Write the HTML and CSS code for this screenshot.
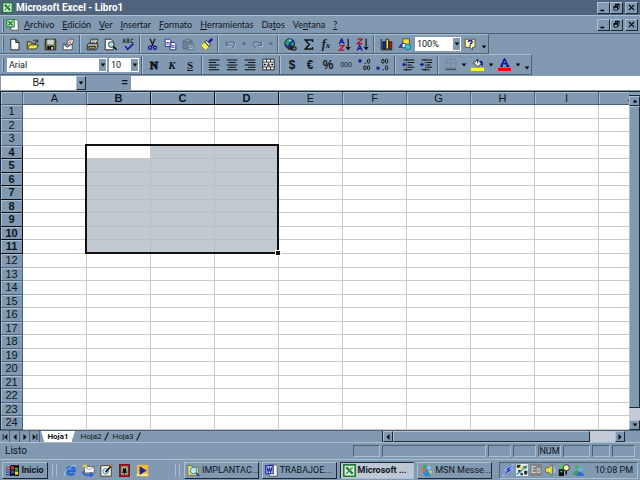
FILE: index.html
```
<!DOCTYPE html>
<html lang="es">
<head>
<meta charset="utf-8">
<title>Microsoft Excel - Libro1</title>
<link rel="stylesheet" href="styles.css">
</head>
<body>
<svg class="defs" aria-hidden="true">
  <symbol id="xl" viewBox="0 0 16 16"><path fill="#e8f4e4" stroke="#1d7a33" stroke-width="2" d="M1 1h14v14H1z"/><path fill="none" stroke="#1d7a33" stroke-width="3" d="M4 4l8 8"/><path fill="none" stroke="#3f9a50" stroke-width="2" d="M12 4l-8 8"/></symbol>
  <symbol id="min" viewBox="0 0 12 12"><path d="M2 9h5v2H2z"/></symbol>
  <symbol id="restore" viewBox="0 0 12 12"><path fill="none" stroke="#000" d="M4.500 4V2.500h5v5H8M2.500 5.500h5v4h-5z"/><path d="M4 1h6v2H4zM2 4h6v2H2z"/></symbol>
  <symbol id="close" viewBox="0 0 12 12"><path fill="none" stroke="#000" stroke-width="1.600" d="M2.500 2.500l7 7M9.500 2.500l-7 7"/></symbol>
  <symbol id="down" viewBox="0 0 8 8"><path d="M1 2h6L4 6z"/></symbol>
  <symbol id="up" viewBox="0 0 8 8"><path d="M1 6h6L4 2z"/></symbol>
  <symbol id="left" viewBox="0 0 8 8"><path d="M6 0v8L2 4z"/></symbol>
  <symbol id="right" viewBox="0 0 8 8"><path d="M2 0v8l4-4z"/></symbol>
  <symbol id="first" viewBox="0 0 8 8"><path d="M7 0v8L3 4zM1 0h1v8H1z"/></symbol>
  <symbol id="last" viewBox="0 0 8 8"><path d="M1 0v8l4-4zM6 0h1v8H6z"/></symbol>
</svg>

<header class="titlebar">
  <svg class="ic-s"><use href="#xl"/></svg>
  <h1>Microsoft Excel - Libro1</h1>
  <div class="winbtns">
    <button type="button" aria-label="Minimizar"><svg><use href="#min"/></svg></button>
    <button type="button" aria-label="Restaurar"><svg><use href="#restore"/></svg></button>
    <button type="button" class="x" aria-label="Cerrar"><svg><use href="#close"/></svg></button>
  </div>
</header>

<nav class="menubar">
  <span class="grip"></span>
  <svg class="ic" viewBox="0 0 16 16"><path fill="#fff" stroke="#444" d="M6 2h7l2 2v11H6z"/><path fill="#e8f4e4" stroke="#1d8a33" stroke-width="1.500" d="M1 2h9v9H1z"/><path fill="none" stroke="#1d8a33" stroke-width="2" d="M3 4l5 5M8 4L3 9"/></svg>
  <div class="menus">
    <a href="#"><u>A</u>rchivo</a><a href="#"><u>E</u>dición</a><a href="#"><u>V</u>er</a><a href="#"><u>I</u>nsertar</a><a href="#"><u>F</u>ormato</a><a href="#"><u>H</u>erramientas</a><a href="#">Da<u>t</u>os</a><a href="#">Ve<u>n</u>tana</a><a href="#"><u>?</u></a>
  </div>
  <div class="winbtns">
    <button type="button" aria-label="Minimizar libro"><svg><use href="#min"/></svg></button>
    <button type="button" aria-label="Restaurar libro"><svg><use href="#restore"/></svg></button>
    <button type="button" class="x" aria-label="Cerrar libro"><svg><use href="#close"/></svg></button>
  </div>
</nav>

<div class="toolbar" role="toolbar" aria-label="Estándar">
  <span class="grip"></span>
  <button type="button" aria-label="Nuevo"><svg viewBox="0 0 16 16"><path fill="#fff" stroke="#111" d="M3.500 1.500h6l4 4v9h-10zM9.500 1.500v4h4"/></svg></button>
  <button type="button" aria-label="Abrir"><svg viewBox="0 0 16 16"><path fill="#c9c04a" stroke="#222" d="M1.500 13.500v-9h4l1 2h5v2"/><path fill="#f2ea4c" stroke="#222" d="M1.500 13.500l3-5h11l-3 5z"/><path fill="none" stroke="#111" d="M9 3.500c2-2 4-1 5 1M14.500 2v3h-3"/></svg></button>
  <button type="button" aria-label="Guardar"><svg viewBox="0 0 16 16"><path fill="#77773a" stroke="#111" d="M1.500 1.500h13v13h-13z"/><path fill="#cfd3d6" d="M4 2h8v6H4z"/><path fill="#111" d="M4 10h8v4H4z"/><path fill="#ddd" d="M9 11h2v3H9z"/></svg></button>
  <button type="button" aria-label="Correo"><svg viewBox="0 0 16 16"><path fill="#fff" stroke="#444" d="M5.500 7.500l3-6h6l-2 7M1.500 7.500h11v7h-11zM1.500 7.500l5 4 6-4"/><path fill="none" stroke="#c44" d="M9 3.500h3M8 5.500h3"/></svg></button>
  <span class="sep"></span>
  <button type="button" aria-label="Imprimir"><svg viewBox="0 0 16 16"><path fill="#fff" stroke="#111" d="M4.500 7.500l2-6h8l-2 6z"/><path fill="#a7a7a0" stroke="#111" d="M1.500 8.500l2-2h11v5l-2 3h-11z"/><path fill="#e6e24c" stroke="#111" d="M3.500 10.500h8v2h-8z"/><path stroke="#555" d="M7 3.500h5M6 5.500h5"/></svg></button>
  <button type="button" aria-label="Vista preliminar"><svg viewBox="0 0 16 16"><path fill="#fff" stroke="#111" d="M1.500 1.500h7l3 3v10h-10z"/><circle cx="9" cy="8" r="3.500" fill="#a9e3e6" stroke="#111"/><path stroke="#111" stroke-width="2" d="M11.500 10.500l4 4"/></svg></button>
  <button type="button" aria-label="Ortografía"><svg viewBox="0 0 16 16"><path fill="none" stroke="#222" d="M1 6l1.500-5L4 6M1.500 4.500h2M6 1v4.500h2.500V3.500H6.500M8 3.500V1H6M14 1.500h-3v4h3"/><path fill="none" stroke="#1717b0" stroke-width="2" d="M4 10l3 4 7-7"/></svg></button>
  <span class="sep"></span>
  <button type="button" aria-label="Cortar"><svg viewBox="0 0 16 16"><path fill="none" stroke="#111" stroke-width="1.500" d="M5 1l4 9M11 1l-4 9"/><g fill="none" stroke="#14149c" stroke-width="1.500"><circle cx="5" cy="12" r="2"/><circle cx="11" cy="12" r="2"/></g></svg></button>
  <button type="button" aria-label="Copiar"><svg viewBox="0 0 16 16"><path fill="#fff" stroke="#14149c" d="M1.500 1.500h5l2 2v7h-7zM7.500 5.500h5l2 2v7h-7z"/><path stroke="#14149c" d="M3 5.500h3M3 7.500h3M9 9.500h4M9 11.500h4"/></svg></button>
  <button type="button" aria-label="Pegar"><svg viewBox="0 0 16 16"><path fill="#6d8298" stroke="#52667c" d="M1.500 3.500h11v10h-11z"/><path fill="#8fa5ba" stroke="#52667c" d="M4.500 1.500h5v3h-5z"/><path fill="#a9bccd" stroke="#52667c" d="M7.500 7.500h7v7h-7zM9 9.500h4M9 11.500h4"/></svg></button>
  <button type="button" aria-label="Copiar formato"><svg viewBox="0 0 16 16"><path stroke="#14149c" stroke-width="3" d="M15 1l-4 4"/><path fill="#ddd" stroke="#222" d="M8 3l5 5-2 2-5-5z"/><path fill="#f6ee45" stroke="#776" d="M5 5l6 6-4 4.500-6-6z"/></svg></button>
  <span class="sep"></span>
  <button type="button" aria-label="Deshacer"><svg viewBox="0 0 16 16"><g fill="none" stroke="#b4c5d4" transform="translate(1 1)"><path stroke-width="1.500" d="M3 4v5h5M3 9c3-6 10-5 10-1 0 2-1 3-3 4"/></g><path fill="none" stroke="#586f88" stroke-width="1.500" d="M3 4v5h5M3 9c3-6 10-5 10-1 0 2-1 3-3 4"/></svg></button>
  <button type="button" class="drop dim" aria-label="Lista deshacer"><svg><use href="#down"/></svg></button>
  <button type="button" aria-label="Rehacer"><svg viewBox="0 0 16 16"><path fill="none" stroke="#b4c5d4" stroke-width="1.500" d="M14 5v5H9M14 10C11 4 4 5 4 9c0 2 1 3 3 4"/><path fill="none" stroke="#586f88" stroke-width="1.500" d="M13 4v5H8M13 9C10 3 3 4 3 8c0 2 1 3 3 4"/></svg></button>
  <button type="button" class="drop dim" aria-label="Lista rehacer"><svg><use href="#down"/></svg></button>
  <span class="sep"></span>
  <button type="button" aria-label="Hipervínculo"><svg viewBox="0 0 16 16"><circle cx="7" cy="7" r="6" fill="#1a36b8" stroke="#123"/><path fill="#2fa84a" d="M3 3l4-2 2 3-3 2-1 4-3-3zM9 6l3-1v4l-3 1z"/><path fill="#9cd7ea" d="M6 2h3v2H6z"/><g fill="none" stroke="#222" stroke-width="1.500"><ellipse cx="8" cy="12" rx="3" ry="2"/><ellipse cx="12" cy="13" rx="3" ry="2"/></g></svg></button>
  <button type="button" aria-label="Autosuma"><svg viewBox="0 0 16 16"><path fill="none" stroke="#111" stroke-width="1.800" d="M13 5V2.500H4L9 8l-5 5.500h9V11"/></svg></button>
  <button type="button" class="fx" aria-label="Pegar función"><i>f<small>x</small></i></button>
  <button type="button" aria-label="Orden ascendente"><svg viewBox="0 0 16 16"><path fill="none" stroke="#14149c" stroke-width="1.500" d="M1.500 7.500L4.500 1l3 6.500M2.500 5h4"/><path fill="none" stroke="#b01020" stroke-width="1.500" d="M1.500 9.500h6l-6 5.500h6"/><path stroke="#111" stroke-width="1.500" d="M12.500 1v12"/><path d="M9.500 11h6l-3 4z"/></svg></button>
  <button type="button" aria-label="Orden descendente"><svg viewBox="0 0 16 16"><path fill="none" stroke="#b01020" stroke-width="1.500" d="M1.500 1.500h6l-6 5.500h6"/><path fill="none" stroke="#14149c" stroke-width="1.500" d="M1.500 15.500l3-6.500 3 6.500M2.500 13h4"/><path stroke="#111" stroke-width="1.500" d="M12.500 1v12"/><path d="M9.500 11h6l-3 4z"/></svg></button>
  <span class="sep"></span>
  <button type="button" aria-label="Asistente para gráficos"><svg viewBox="0 0 16 16"><path fill="none" stroke="#111" d="M1.500 1v13.500H15"/><path fill="#1a28c8" stroke="#111" d="M3.500 4.500h3v9h-3z"/><path fill="#f5ea3a" stroke="#111" d="M7.500 1.500h3v12h-3z"/><path fill="#d01818" stroke="#111" d="M11.500 4.500h3v9h-3z"/></svg></button>
  <button type="button" aria-label="Dibujo"><svg viewBox="0 0 16 16"><path fill="#f0e23c" stroke="#443" d="M6 1h8v7H6z"/><path fill="#1d35b4" d="M0 12L6 5l3 7z"/><path fill="#fff" stroke="#333" d="M5 7h5v5H5z"/><circle cx="12" cy="11" r="3.500" fill="#35c8d8" stroke="#167"/></svg></button>
  <span class="combo zoom"><input type="text" value="100%" aria-label="Zoom"><button type="button" aria-label="Lista zoom"><svg><use href="#down"/></svg></button></span>
  <button type="button" aria-label="Ayuda"><svg viewBox="0 0 16 16"><path fill="#fff7a0" stroke="#444" d="M1.500 1.500h12v10h-3v3l-3-3h-6z"/><path fill="none" stroke="#14149c" stroke-width="1.800" d="M5.500 5c0-2.500 4.500-2.500 4.500 0 0 1.500-2.300 1.500-2.300 3M7.700 9v1.500"/></svg></button>
  <button type="button" class="drop low" aria-label="Más botones"><svg><use href="#down"/></svg></button>
</div>

<div class="toolbar fmt" role="toolbar" aria-label="Formato">
  <span class="grip"></span>
  <span class="combo font"><input type="text" value="Arial" aria-label="Fuente"><button type="button" aria-label="Lista fuentes"><svg><use href="#down"/></svg></button></span>
  <span class="combo size"><input type="text" value="10" aria-label="Tamaño"><button type="button" aria-label="Lista tamaños"><svg><use href="#down"/></svg></button></span>
  <span class="sep"></span>
  <button type="button" class="glyph heavy">N</button>
  <button type="button" class="glyph"><i>K</i></button>
  <button type="button" class="glyph"><u>S</u></button>
  <span class="sep"></span>
  <button type="button" aria-label="Izquierda"><svg viewBox="0 0 16 16"><path stroke="#111" stroke-width="1.300" d="M1 2.500h13M1 5.500h9M1 8.500h13M1 11.500h9M1 14.500h13"/></svg></button>
  <button type="button" aria-label="Centrar"><svg viewBox="0 0 16 16"><path stroke="#111" stroke-width="1.300" d="M1 2.500h13M3 5.500h9M1 8.500h13M3 11.500h9M1 14.500h13"/></svg></button>
  <button type="button" aria-label="Derecha"><svg viewBox="0 0 16 16"><path stroke="#111" stroke-width="1.300" d="M1 2.500h13M5 5.500h9M1 8.500h13M5 11.500h9M1 14.500h13"/></svg></button>
  <button type="button" aria-label="Combinar y centrar"><svg viewBox="0 0 16 16"><path fill="#fff" stroke="#111" d="M1 1.500h14v13H1zM1 5h14M1 11h14M5.500 1.500V5M10.500 1.500V5M5.500 11v3.500M10.500 11v3.500"/><path d="M2 8l2-2v4zM14 8l-2-2v4z"/><path fill="none" stroke="#111" d="M6.500 10.500L8 6l1.500 4.500M7 9h2M4 8h1.500M10.500 8H12"/></svg></button>
  <span class="sep"></span>
  <button type="button" class="glyph cur">$</button>
  <button type="button" class="glyph cur">€</button>
  <button type="button" class="glyph cur">%</button>
  <button type="button" class="glyph tiny">000</button>
  <button type="button" aria-label="Aumentar decimales"><svg viewBox="0 0 16 16"><path stroke="#14149c" stroke-width="1.500" d="M0 3.500h5M2.500 1v5"/><g fill="none" stroke="#111" stroke-width="1.200"><ellipse cx="13" cy="4" rx="1.500" ry="2.500"/><ellipse cx="8.500" cy="12" rx="1.500" ry="2.500"/><ellipse cx="13" cy="12" rx="1.500" ry="2.500"/></g><path d="M8 6h2v1H8z"/></svg></button>
  <button type="button" aria-label="Disminuir decimales"><svg viewBox="0 0 16 16"><path stroke="#14149c" stroke-width="1.500" d="M0 12.500h5M2.500 10v5"/><g fill="none" stroke="#111" stroke-width="1.200"><ellipse cx="8.500" cy="4" rx="1.500" ry="2.500"/><ellipse cx="13" cy="4" rx="1.500" ry="2.500"/><ellipse cx="13" cy="12" rx="1.500" ry="2.500"/></g><path d="M8 14h2v1H8z"/></svg></button>
  <span class="sep wide"></span>
  <button type="button" aria-label="Disminuir sangría"><svg viewBox="0 0 16 16"><path stroke="#111" stroke-width="1.300" d="M2 2.500h13M7 5.500h8M7 8.500h5M7 11.500h8M2 14.500h10"/><path stroke="#111" stroke-dasharray="1 1" d="M5.500 1v15"/><path fill="#14149c" d="M0 8l3-3v2h2v2H3v2z"/></svg></button>
  <button type="button" aria-label="Aumentar sangría"><svg viewBox="0 0 16 16"><path stroke="#111" stroke-width="1.300" d="M2 2.500h13M8 5.500h7M8 8.500h5M8 11.500h7M2 14.500h10"/><path stroke="#111" stroke-dasharray="1 1" d="M6.500 1v15"/><path fill="#14149c" d="M5 8L2 5v2H0v2h2v2z"/></svg></button>
  <span class="sep"></span>
  <button type="button" aria-label="Bordes"><svg viewBox="0 0 16 16"><path fill="none" stroke="#64788e" stroke-dasharray="1 1" d="M2.500 1.500h12v10h-12zM8.500 1v10M2 6.500h12"/><path fill="#4a5260" d="M2 13h13v2H2z"/></svg></button>
  <button type="button" class="drop" aria-label="Lista bordes"><svg><use href="#down"/></svg></button>
  <button type="button" aria-label="Color de relleno"><svg viewBox="0 0 16 16"><path fill="#ddd" stroke="#222" d="M3 6l5-4 5 5-5 4z"/><path fill="none" stroke="#222" d="M8 6V1"/><path fill="#14149c" d="M11 3c4 0 4 4 3 8l-2-4z"/><path fill="#ff0" d="M0 12h16v4H0z"/></svg></button>
  <button type="button" class="drop" aria-label="Lista relleno"><svg><use href="#down"/></svg></button>
  <button type="button" aria-label="Color de fuente"><svg viewBox="0 0 16 16"><path fill="none" stroke="#14149c" stroke-width="2" d="M4 9.500L8 1l4 8.500M5 7h6M3 10h3M10 10h4"/><path fill="#f00" d="M0 12h16v4H0z"/></svg></button>
  <button type="button" class="drop" aria-label="Lista color"><svg><use href="#down"/></svg></button>
  <button type="button" class="drop low" aria-label="Más formato"><svg><use href="#down"/></svg></button>
</div>

<div class="formulabar">
  <input class="namebox" type="text" value="B4" aria-label="Cuadro de nombres">
  <button type="button" class="raised" aria-label="Lista nombres"><svg><use href="#down"/></svg></button>
  <label for="formula">=</label>
  <input id="formula" type="text">
</div>

<main class="sheet">
  <table id="grid"></table>
  <div class="vscroll">
    <span class="split"></span>
    <button type="button" aria-label="Subir"><svg><use href="#up"/></svg></button>
    <span class="thumb"></span><span class="track"></span>
    <button type="button" aria-label="Bajar"><svg><use href="#down"/></svg></button>
  </div>
</main>

<div class="tabs">
  <div class="tabnav">
    <button type="button" aria-label="Primera"><svg><use href="#first"/></svg></button>
    <button type="button" aria-label="Anterior"><svg><use href="#left"/></svg></button>
    <button type="button" aria-label="Siguiente"><svg><use href="#right"/></svg></button>
    <button type="button" aria-label="Última"><svg><use href="#last"/></svg></button>
  </div>
  <div class="tablist">
    <a href="#" class="on">Hoja1</a>
    <a href="#">Hoja2</a>
    <a href="#">Hoja3</a>
  </div>
  <div class="hscroll">
    <span class="split"></span>
    <button type="button" aria-label="Izquierda"><svg><use href="#left"/></svg></button>
    <span class="thumb"></span><span class="track"></span>
    <button type="button" aria-label="Derecha"><svg><use href="#right"/></svg></button>
    <span class="corner"></span>
  </div>
</div>

<div class="status">
  <span class="msg">Listo</span>
  <span class="p a"></span><span class="p b"></span><span class="p c"></span><span class="p c"></span><span class="p c">NUM</span><span class="p a"></span><span class="p d"></span><span class="p c"></span>
</div>

<footer class="taskbar">
  <button type="button" class="start raised"><svg viewBox="0 0 16 16"><path d="M5 2c3-2 7 1 11-1v13c-4 2-8-1-11 1z"/><path fill="#e03020" d="M6 3c1.500-1 3 0 4 0v4c-1 0-2.500-1-4 0z"/><path fill="#30a040" d="M11 4c1.500.500 3 .500 4 0v4c-1 .500-2.500.500-4 0z"/><path fill="#3050d0" d="M6 8c1.500-1 3 0 4 0v4c-1 0-2.500-1-4 0z"/><path fill="#f0d830" d="M11 9c1.500.500 3 .500 4 0v4c-1 .500-2.500.500-4 0z"/><path stroke="#a01818" stroke-width="1.500" stroke-dasharray="2 1" d="M0 4h5M0 7h5"/><path stroke="#1c2c90" stroke-width="1.500" stroke-dasharray="2 1" d="M0 10h5M0 13h5"/></svg>Inicio</button>
  <span class="grips"></span>
  <div class="quick">
    <button type="button" aria-label="Internet Explorer"><svg viewBox="0 0 16 16"><path fill="none" stroke="#2468d8" stroke-width="3" d="M4 8.500h9C13 2 4 2 4 8.500c0 5 6 6 8.500 3"/><path fill="none" stroke="#bfe0ff" d="M1 14C-1 10 10 0 15 2"/></svg></button>
    <button type="button" aria-label="Outlook Express"><svg viewBox="0 0 16 16"><path fill="#fff" stroke="#555" d="M3 3h12v8H3z"/><path fill="none" stroke="#777" d="M3 3l6 4 6-4"/><path fill="none" stroke="#2c62d6" stroke-width="2" d="M1 9c0 5 6 6 11 4M10 10l3 3-3 3"/><path fill="#f0c83c" d="M1 1h5v3H1z"/></svg></button>
    <button type="button" aria-label="Escritorio"><svg viewBox="0 0 16 16"><path fill="#c9ab58" stroke="#444" d="M1 2h13v13H1z"/><path fill="#f2fafa" d="M2 3h11v11H2z"/><circle cx="7" cy="9" r="3.500" fill="#cfe8ee" stroke="#3a7a8a"/><path stroke="#111" stroke-width="2" d="M7 10l8-9"/><path stroke="#e0a020" stroke-width="2" d="M13 3l2-2"/></svg></button>
    <button type="button" aria-label="Juego"><svg viewBox="0 0 16 16"><path fill="#b81818" stroke="#211" d="M2 0h12v16H2z"/><path fill="#9cc4a4" d="M4 3h8v10H4z"/><path d="M6 4l2 2 2-2v4l1 3H9l-1 2-1-2H5l1-3z"/></svg></button>
    <button type="button" aria-label="Reproductor"><svg viewBox="0 0 16 16"><path fill="#f4b820" d="M1 1h14v14H1z"/><path fill="#f8e490" d="M1 12h14v3H1z"/><path fill="#26267c" stroke="#fff" stroke-width=".500" d="M4 2l10 6-10 6z"/></svg></button>
  </div>
  <span class="grips"></span>
  <div class="tasks">
    <button type="button" class="raised"><svg viewBox="0 0 16 16"><path fill="#f3df66" stroke="#665" d="M1 2h5l1 2h7v10H1z"/><circle cx="8" cy="8" r="4" fill="#b5ecf4" stroke="#27a"/><path stroke="#124ca0" stroke-width="2" d="M11 11l4 4"/></svg><span>IMPLANTAC...</span></button>
    <button type="button" class="raised"><svg viewBox="0 0 16 16"><path fill="#fff" stroke="#444" d="M5 1h8l2 2v12H5z"/><path fill="#dde4ff" stroke="#1c2ca0" stroke-width="1.500" d="M1 2h9v10H1z"/><path fill="none" stroke="#1c2ca0" stroke-width="1.500" d="M2.500 4l1.500 6 1.500-5L7 10l1.500-6"/></svg><span>TRABAJOE...</span></button>
    <button type="button" class="raised active"><svg><use href="#xl"/></svg><span>Microsoft ...</span></button>
    <button type="button" class="raised"><svg viewBox="0 0 16 16"><path fill="#2c8ad8" d="M4 6c4-2 8 2 9 9H7c-3-2-4-5-3-9z"/><path fill="#e86a28" d="M1 4l5 2 1 5-4-2z"/><circle cx="6" cy="3" r="2.500" fill="#38b058"/><circle cx="11" cy="5" r="2.500" fill="#7cc8f0"/><path fill="#f0d040" d="M10 8l5 1-2 4z"/></svg><span>MSN Messe...</span></button>
  </div>
  <div class="tray">
    <svg viewBox="0 0 16 16"><path fill="#2038e0" stroke="#dfe8ff" stroke-width=".700" d="M16 0L3 8h4l-6 8 14-9h-5z"/></svg>
    <svg viewBox="0 0 16 16"><path fill="#e8ecec" d="M0 0h16v16H0z"/><path fill="#20262c" d="M1 1h5v4H1zM9 3h5v3H9zM3 8h4v3H3zM11 9h4v5h-4zM6 12h3v3H6z"/><path stroke="#3aa0a8" stroke-width="2" d="M1 14L15 2"/><path fill="#f0e040" d="M5 3h5v3H5z"/></svg>
    <span class="lang">Es</span>
    <svg viewBox="0 0 16 16"><path fill="#f0e23c" stroke="#554" d="M2 5h4l5-4v14l-5-4H2z"/><path fill="none" stroke="#dfe6ec" d="M13 4c2 2 2 6 0 8"/></svg>
    <svg viewBox="0 0 16 16"><path fill="#111" d="M1 7h7v9H1z"/><path fill="#3bd050" d="M2 2h5v4H2zM3 9h3v2H3z"/><circle cx="11" cy="5" r="4" fill="#fff8b0" stroke="#111"/><path fill="none" stroke="#111" stroke-width="2" d="M11 9v5"/></svg>
    <svg viewBox="0 0 16 16"><circle cx="7" cy="4" r="3" fill="#46b070"/><path fill="#3c9c60" d="M1 15c0-8 11-8 11 0z"/><circle cx="11" cy="7" r="2.500" fill="#5cb8f0"/><path fill="#2c70d0" d="M6 16c0-7 10-7 10 0z"/></svg>
    <time>10:08 PM</time>
  </div>
</footer>
<script src="grid.js"></script>
</body>
</html>
```

FILE: styles.css
```
:root {
  --face: #8199b1;
  --light: #abbfd1;
  --dark: #4c6078;
  --ink: #10151c;
}
* { box-sizing: border-box; }
body {
  margin: 0;
  height: 100vh;
  display: flex;
  flex-direction: column;
  background: var(--face);
  color: var(--ink);
  font: 9px/12px Roboto, "Liberation Sans", sans-serif;
  overflow: hidden;
}
.defs { display: none; }
svg { display: block; width: 13px; height: 13px; flex: none; }
button, input {
  font: inherit;
  color: inherit;
  border: 0;
  padding: 0;
  margin: 0;
  background: none;
  border-radius: 0;
  min-width: 0;
}
button { display: flex; align-items: center; justify-content: center; }
a { color: inherit; text-decoration: none; }

.raised, .winbtns button {
  background: var(--face);
  border: 1px solid;
  border-color: var(--light) #1c2836 #1c2836 var(--light);
}

.titlebar {
  height: 15px;
  flex: none;
  display: flex;
  align-items: center;
  gap: 3px;
  padding: 0 2px;
  background: #50647f;
  color: #fff;
}
.titlebar h1 { margin: 0; font-size: 10px; font-weight: 700; line-height: 14px; flex: 1; }
.ic-s { width: 11px; height: 11px; }
.winbtns { display: flex; flex: none; color: #000; }
.winbtns button { width: 13px; height: 12px; }
.winbtns svg { width: 9px; height: 9px; }
.winbtns .x { margin-left: 2px; }

.menubar {
  height: 19px;
  flex: none;
  display: flex;
  align-items: center;
  padding: 0 2px 0 0;
  border-top: 1px solid var(--light);
  border-bottom: 1px solid var(--dark);
}
.menubar .ic { margin: 0 5px 0 1px; }
.menus { display: flex; gap: 8px; flex: 1; font-family: Lato, "Liberation Sans", sans-serif; }
.grip {
  width: 2px;
  height: 14px;
  margin: 0 1px 0 2px;
  border-left: 1px solid var(--light);
  border-right: 1px solid var(--dark);
}

.toolbar {
  height: 20px;
  flex: none;
  align-self: flex-start;
  display: flex;
  align-items: center;
  border-top: 1px solid var(--light);
  border-right: 1px solid var(--dark);
  border-bottom: 1px solid var(--dark);
}
.toolbar.fmt { height: 21px; }
.toolbar > button { width: 18px; height: 18px; flex: none; }
.toolbar > .drop { width: 9px; }
.drop svg { width: 6px; height: 6px; }
.toolbar > .low { align-items: flex-end; padding-bottom: 3px; }
.dim { color: #566b83; fill: #566b83; }
.sep {
  width: 2px;
  height: 18px;
  margin: 0 2px;
  border-left: 1px solid var(--dark);
  border-right: 1px solid var(--light);
}
.sep.wide { margin: 0 3px; }
.combo { display: flex; height: 14px; background: #fff; margin-left: 2px; }
.combo input { flex: 1; width: 0; padding-left: 2px; }
.combo button { width: 9px; background: var(--face); border: 1px solid #fff; }
.combo svg { width: 6px; height: 6px; }
.font { width: 100px; }
.size { width: 30px; }
.zoom { width: 46px; }
.glyph { font: 700 11px/12px "Liberation Serif", serif; }
.glyph.heavy { -webkit-text-stroke: 1px; }
.glyph.cur { font: 700 12px/12px "Liberation Sans", sans-serif; }
.glyph.tiny { font: 7px/12px "Liberation Sans", sans-serif; }
.fx { font: 700 12px/12px "Liberation Serif", serif; }
.fx small { font-size: 9px; }

.formulabar {
  height: 16px;
  flex: none;
  display: flex;
  padding: 1px 0 1px 1px;
}
.formulabar input { background: #fff; }
.namebox { width: 75px; text-align: center; font: 10px/12px "Liberation Sans", sans-serif; }
.formulabar .raised { width: 10px; }
.formulabar svg { width: 6px; height: 6px; }
.formulabar label { width: 45px; padding-right: 3px; text-align: right; font: 700 11px/13px "Liberation Sans", sans-serif; }
#formula { flex: 1; }

.sheet {
  flex: 1;
  min-height: 0;
  display: flex;
  border-top: 1px solid #1c2836;
  border-left: 1px solid #1c2836;
}
#grid {
  flex: 1;
  min-width: 0;
  display: grid;
  grid-template-columns: minmax(0, 1fr);
  grid-template-rows: 13px repeat(24, minmax(0, 1fr));
  background: #fff;
  overflow: hidden;
}
#grid thead, #grid tbody { display: contents; }
#grid tr { display: grid; grid-template-columns: 22px repeat(9, 64px) minmax(64px, 1fr); min-height: 0; }
#grid th {
  padding: 0;
  min-height: 0;
  overflow: hidden;
  background: var(--face);
  font: 11px/13px "Liberation Sans", sans-serif;
  text-align: center;
  border: 0 solid var(--dark);
  border-width: 0 1px 1px 0;
  box-shadow: inset 1px 1px var(--light);
}
#grid th.on { font-weight: 700; border-color: #0c1016; }
#grid td {
  padding: 0;
  min-height: 0;
  border: 0 solid #c9c9c9;
  border-width: 0 1px 1px 0;
}
#grid td.sel { background: #c2c8d0; border-color: #b9bec6; }
#grid td.cursor { position: relative; background: #fff; }
.range {
  position: absolute;
  z-index: 1;
  top: -2px;
  left: -2px;
  width: calc(300% + 5px);
  height: calc(800% + 10px);
  border: 2px solid #111;
}
.range::after {
  content: "";
  position: absolute;
  right: -3px;
  bottom: -3px;
  width: 4px;
  height: 4px;
  background: #111;
  outline: 1px solid #fff;
}

.vscroll { width: 11px; flex: none; display: flex; flex-direction: column; background: #c3ccd6; }
.vscroll button { height: 10px; flex: none; }
.vscroll button, .hscroll button, .thumb {
  background: var(--face);
  border: 1px solid;
  border-color: var(--light) #1c2836 #1c2836 var(--light);
}
.vscroll svg, .hscroll svg, .tabnav svg { width: 6px; height: 6px; }
.vscroll .split { height: 4px; background: var(--face); border-bottom: 1px solid #1c2836; }
.vscroll .thumb { flex: 303; }
.vscroll .track { flex: 12; }

.tabs { height: 12px; flex: none; display: flex; border-top: 1px solid var(--dark); }
.tabnav { display: flex; width: 41px; }
.tabnav button { width: 10px; border-right: 1px solid var(--dark); }
.tablist { display: flex; flex: 338; align-items: stretch; }
.tablist a {
  position: relative;
  width: 32px;
  text-align: center;
  font-size: 8px;
  line-height: 11px;
}
.tablist a::after {
  content: "";
  position: absolute;
  right: 0;
  top: 1px;
  width: 1px;
  height: 9px;
  background: #111;
  transform: rotate(25deg);
}
.tablist .on {
  width: 34px;
  font-weight: 700;
  background: #fff;
  clip-path: polygon(0 0, 100% 0, 90% 100%, 10% 100%);
}
.hscroll { flex: 259; display: flex; background: #c3ccd6; }
.hscroll button { width: 10px; flex: none; }
.hscroll .split { width: 3px; background: var(--face); border-right: 1px solid #1c2836; }
.hscroll .thumb { flex: 197; }
.hscroll .track { flex: 25; }
.hscroll .corner { width: 15px; background: var(--face); }

.status {
  height: 17px;
  flex: none;
  display: flex;
  align-items: center;
  gap: 2px;
  padding: 0 5px;
  border-top: 1px solid var(--light);
}
.msg { flex: 1; font-size: 10px; }
.p {
  height: 12px;
  border: 1px solid;
  border-color: var(--dark) var(--light) var(--light) var(--dark);
  text-align: center;
  line-height: 11px;
}
.p.a { width: 27px; }
.p.b { width: 104px; }
.p.c { width: 23px; }
.p.d { width: 18px; }

.taskbar {
  height: 21px;
  flex: none;
  display: flex;
  align-items: center;
  padding: 0 2px;
  border-top: 1px solid var(--light);
}
.start { height: 17px; width: 46px; gap: 2px; font-weight: 700; }
.grips { width: 5px; height: 14px; margin: 0 4px; border: 1px solid; border-color: transparent var(--light); }
.quick { display: flex; flex: 0 0 110px; }
.quick button { width: 18px; }
.tasks { display: flex; flex: 1; gap: 3px; min-width: 0; }
.tasks button { flex: 1; height: 17px; padding-left: 2px; gap: 2px; justify-content: flex-start; white-space: nowrap; }
.tasks .active {
  background: #bdc8d4;
  font-weight: 700;
  border-color: #1c2836 var(--light) var(--light) #1c2836;
}
.tray {
  display: flex;
  align-items: center;
  gap: 2px;
  height: 17px;
  flex: 0 0 139px;
  margin-left: 7px;
  padding: 0 4px 0 2px;
  border: 1px solid;
  border-color: var(--dark) var(--light) var(--light) var(--dark);
}
.tray svg { width: 12px; height: 12px; }
.tray time { flex: 1; text-align: right; white-space: nowrap; }
.lang { width: 12px; background: #858585; color: #dde; text-align: center; }
```

FILE: grid.js
```
const grid = document.getElementById("grid");
const cols = "ABCDEFGHIJ".split("");
const inCols = c => c >= 1 && c <= 3;
const inRows = r => r >= 4 && r <= 11;

const head = grid.createTHead().insertRow();
head.appendChild(document.createElement("th"));
cols.forEach((name, c) => {
  const th = document.createElement("th");
  th.textContent = name;
  if (inCols(c)) th.className = "on";
  head.appendChild(th);
});

const body = grid.createTBody();
for (let r = 1; r <= 24; r++) {
  const row = body.insertRow();
  const th = document.createElement("th");
  th.textContent = r;
  if (inRows(r)) th.className = "on";
  row.appendChild(th);
  cols.forEach((_, c) => {
    const td = row.insertCell();
    if (r === 4 && c === 1) {
      td.className = "cursor";
      const range = document.createElement("div");
      range.className = "range";
      td.appendChild(range);
    } else if (inRows(r) && inCols(c)) {
      td.className = "sel";
    }
  });
}
```
